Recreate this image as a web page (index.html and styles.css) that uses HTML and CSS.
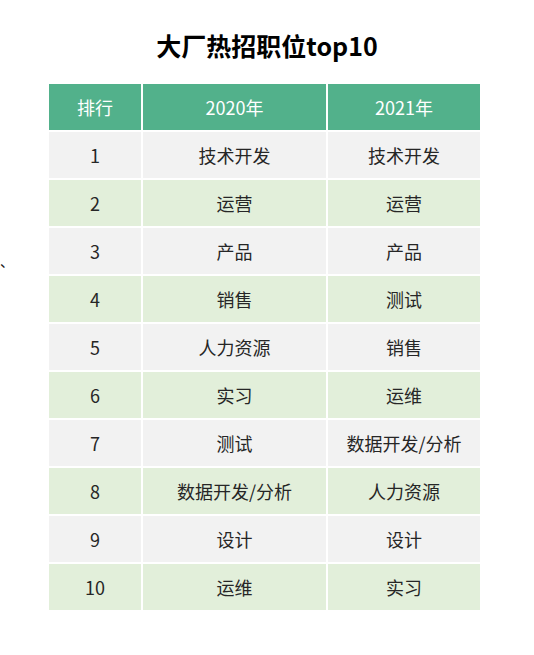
FILE: index.html
```html
<!DOCTYPE html>
<html lang="zh-CN">
<head>
<meta charset="utf-8">
<title>大厂热招职位top10</title>
<link rel="stylesheet" href="styles.css">
</head>
<body>
<div class="page">
  <span class="stray">、</span>
  <h1 class="title">大厂热招职位top10</h1>
  <div class="table">
    <div class="cell head">排行</div><div class="cell head">2020年</div><div class="cell head">2021年</div>
    <div class="cell gray">1</div><div class="cell gray">技术开发</div><div class="cell gray">技术开发</div>
    <div class="cell green">2</div><div class="cell green">运营</div><div class="cell green">运营</div>
    <div class="cell gray">3</div><div class="cell gray">产品</div><div class="cell gray">产品</div>
    <div class="cell green">4</div><div class="cell green">销售</div><div class="cell green">测试</div>
    <div class="cell gray">5</div><div class="cell gray">人力资源</div><div class="cell gray">销售</div>
    <div class="cell green">6</div><div class="cell green">实习</div><div class="cell green">运维</div>
    <div class="cell gray">7</div><div class="cell gray">测试</div><div class="cell gray">数据开发/分析</div>
    <div class="cell green">8</div><div class="cell green">数据开发/分析</div><div class="cell green">人力资源</div>
    <div class="cell gray">9</div><div class="cell gray">设计</div><div class="cell gray">设计</div>
    <div class="cell green">10</div><div class="cell green">运维</div><div class="cell green">实习</div>
  </div>
</div>
</body>
</html>
```
FILE: styles.css
```css
html, body {
  margin: 0;
  padding: 0;
  background: #ffffff;
}
.page {
  position: relative;
  width: 534px;
  height: 655px;
  font-family: "Noto Sans CJK SC", "Noto Sans", sans-serif;
}
.stray {
  position: absolute;
  left: 0;
  top: 254px;
  font-size: 14px;
  line-height: 14px;
  color: #222;
}
.title {
  margin: 0;
  padding-top: 27px;
  height: 84px;
  box-sizing: border-box;
  font-size: 25px;
  line-height: 36px;
  font-weight: 700;
  text-align: center;
  color: #000;
}
.table {
  margin-left: 49px;
  width: 431px;
  display: grid;
  grid-template-columns: 92px 183px 152px;
  grid-auto-rows: 46px;
  gap: 2px;
}
.cell {
  display: flex;
  align-items: center;
  justify-content: center;
  font-size: 18px;
  color: #262626;
}
.head {
  background: #52b18b;
  color: #ffffff;
}
.gray {
  background: #f2f2f2;
}
.green {
  background: #e2efda;
}
```
